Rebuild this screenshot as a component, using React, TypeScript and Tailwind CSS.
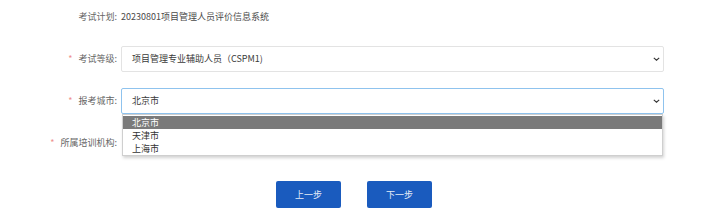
import React from 'react';

const font = { fontFamily: '"Noto Sans CJK SC", "Noto Sans", sans-serif' };

function Chevron() {
  return (
    <svg width="7" height="4" viewBox="0 0 7 4" className="absolute right-[3px] top-1/2 -translate-y-1/2">
      <path d="M0.8 0.8 L3.5 3.2 L6.2 0.8" fill="none" stroke="#333" strokeWidth="1.1" />
    </svg>
  );
}

function Label({ text, required }: { text: string; required?: boolean }) {
  return (
    <div className="w-[117px] shrink-0 text-right text-[9px] text-[#666]">
      {required && <span className="text-[#ee8f8f] mr-[6px]">*</span>}
      {text}:
    </div>
  );
}

export default function App() {
  const cities = ['北京市', '天津市', '上海市'];

  return (
    <div className="w-[724px] h-[222px] bg-white" style={font}>
      <div className="pt-[10px]">
        <div className="flex items-center h-[14px]">
          <Label text="考试计划" />
          <div className="ml-[4px] text-[9px] text-[#4a4a4a]">20230801项目管理人员评价信息系统</div>
        </div>

        <div className="flex items-center h-[26px] mt-[22px]">
          <Label text="考试等级" required />
          <div className="relative ml-[4px] w-[543px] h-[26px] border border-[#e3e3e3] rounded-[2px] flex items-center pl-[10px] text-[9px] text-[#3a3a3a]">
            项目管理专业辅助人员（CSPM1)
            <Chevron />
          </div>
        </div>

        <div className="flex items-center h-[26px] mt-[16px]">
          <Label text="报考城市" required />
          <div className="relative ml-[4px] w-[543px] h-[26px] border border-[#8fc3ee] rounded-[2px] flex items-center pl-[10px] text-[9px] text-[#3a3a3a]">
            北京市
            <Chevron />
            <div className="absolute left-0 right-0 top-[25px] z-10 bg-white border border-[#cfcfcf] shadow-[1px_2px_3px_rgba(0,0,0,0.18)] pt-[1px]">
              {cities.map((c, i) => (
                <div
                  key={c}
                  className={
                    i === 0
                      ? 'h-[13px] leading-[13px] pl-[9px] text-[9px] bg-[#7a7a7a] text-white'
                      : 'h-[13px] leading-[13px] pl-[9px] text-[9px] text-[#333]'
                  }
                >
                  {c}
                </div>
              ))}
            </div>
          </div>
        </div>

        <div className="flex items-center h-[26px] mt-[16px]">
          <Label text="所属培训机构" required />
          <div className="ml-[4px] w-[543px] h-[26px]" />
        </div>

        <div className="flex mt-[25px] ml-[276px] gap-[26px]">
          <button className="w-[65px] h-[27px] bg-[#1a5bbe] rounded-[2px] text-[9px] text-[#e4ecf8]">上一步</button>
          <button className="w-[65px] h-[27px] bg-[#1a5bbe] rounded-[2px] text-[9px] text-[#e4ecf8]">下一步</button>
        </div>
      </div>
    </div>
  );
}
